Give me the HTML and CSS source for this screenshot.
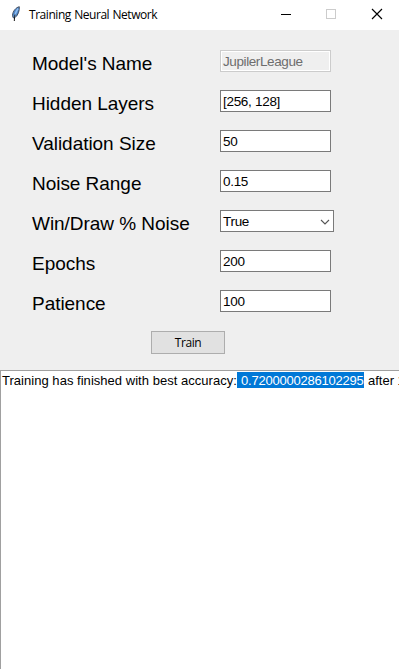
FILE: index.html
```html
<!DOCTYPE html>
<html lang="en">
<head>
<meta charset="utf-8">
<title>Training Neural Network</title>
<link rel="stylesheet" href="styles.css">
</head>
<body>
<div class="window">
  <header class="titlebar">
    <svg class="feather" width="12" height="18" viewBox="0 0 12 18">
      <path d="M9.300 1.700C6 2.500 2.700 6 2.500 10.500L3.200 12.800L5 12.600C8.300 10 9.600 5.500 9.300 1.700Z" fill="#4f87c9" stroke="#3a4455" stroke-width="0.900"/>
      <path d="M8 3.500C6 6.500 5 9 4.500 12" fill="none" stroke="#8fbdf0" stroke-width="1.500"/>
      <path d="M5 9.500C4.500 12 4.500 13 4.300 16" fill="none" stroke="#111" stroke-width="1"/>
    </svg>
    <h1 class="title">Training Neural Network</h1>
    <svg class="controls" width="104" height="12" viewBox="0 0 104 12" shape-rendering="crispEdges">
      <path d="M0 6.500H10" stroke="#000" fill="none"/>
      <rect x="45.500" y="1.500" width="9" height="9" stroke="#ccc" fill="none"/>
      <path d="M91 1L101 11M101 1L91 11" stroke="#000" stroke-width="1.150" fill="none" shape-rendering="auto"/>
    </svg>
  </header>
  <main class="form">
    <div class="row"><span class="label">Model's Name</span><div class="field disabled">JupilerLeague</div></div>
    <div class="row"><span class="label">Hidden Layers</span><div class="field">[256, 128]</div></div>
    <div class="row"><span class="label">Validation Size</span><div class="field">50</div></div>
    <div class="row"><span class="label">Noise Range</span><div class="field">0.15</div></div>
    <div class="row"><span class="label">Win/Draw % Noise</span><div class="field combo">True
      <svg class="chevron" width="10" height="6" viewBox="0 0 10 6"><path d="M1 1L5 5L9 1" fill="none" stroke="#555" stroke-width="1.100"/></svg></div></div>
    <div class="row"><span class="label">Epochs</span><div class="field">200</div></div>
    <div class="row"><span class="label">Patience</span><div class="field">100</div></div>
    <button class="train">Train</button>
  </main>
  <section class="output"><span class="message">Training has finished with best accuracy:</span><span class="selected">0.7200000286102295</span><span class="after">after 1</span></section>
</div>
</body>
</html>
```
FILE: styles.css
```css
* { box-sizing: border-box; }
body {
  margin: 0;
  background: #fff;
  color: #000;
  font-family: "Liberation Sans", Arial, sans-serif;
}
.window {
  display: flex;
  flex-direction: column;
  width: 399px;
  height: 669px;
  overflow: hidden;
}
.titlebar {
  display: flex;
  align-items: center;
  height: 30px;
  padding: 0 14px 2px 10px;
}
.feather { margin-right: 7px; }
.title {
  margin: 0;
  padding-top: 2px;
  font: 12px/16px "Open Sans", sans-serif;
  letter-spacing: -0.45px;
  word-spacing: 0.6px;
  white-space: nowrap;
}
.controls { margin-left: auto; }
.form {
  height: 340px;
  padding-top: 20px;
  background: #efefef;
}
.row {
  display: flex;
  height: 22px;
  margin-bottom: 18px;
  padding-left: 32px;
}
.label {
  width: 188px;
  font-size: 19px;
  letter-spacing: -0.04px;
  line-height: 27px;
  white-space: nowrap;
}
.field {
  width: 111px;
  height: 22px;
  padding-left: 2px;
  border: 1px solid #7a7a7a;
  background: #fff;
  font-size: 13.5px;
  letter-spacing: -0.3px;
  line-height: 21px;
  white-space: nowrap;
}
.disabled {
  border-color: #ccc;
  background: #efefef;
  box-shadow: inset 0 0 0 1px #fff;
  color: #6d6d6d;
  letter-spacing: -0.4px;
}
.combo {
  display: flex;
  align-items: center;
  justify-content: space-between;
  width: 114px;
  padding-right: 3px;
}
.chevron { margin-top: 2px; }
.train {
  display: block;
  width: 74px;
  height: 23px;
  margin: 19px 0 0 151px;
  padding: 0;
  border: 1px solid #adadad;
  background: #e1e1e1;
  color: #000;
  font: 12px/21px "Open Sans", sans-serif;
  letter-spacing: -0.4px;
}
.output {
  display: flex;
  flex: 1;
  align-items: flex-start;
  padding: 1px 0 0 1px;
  border-top: 1px solid #a0a0a0;
  border-left: 1px solid #a0a0a0;
  background: #fff;
  font-size: 13px;
  line-height: 17px;
  white-space: pre;
  overflow: hidden;
}
.message {
  flex: none;
  width: 235px;
  letter-spacing: 0.03px;
}
.selected {
  flex: none;
  width: 127px;
  height: 16px;
  padding-left: 4px;
  background: #0078d7;
  color: #fff;
  letter-spacing: -0.22px;
}
.after { padding-left: 4px; }
```
